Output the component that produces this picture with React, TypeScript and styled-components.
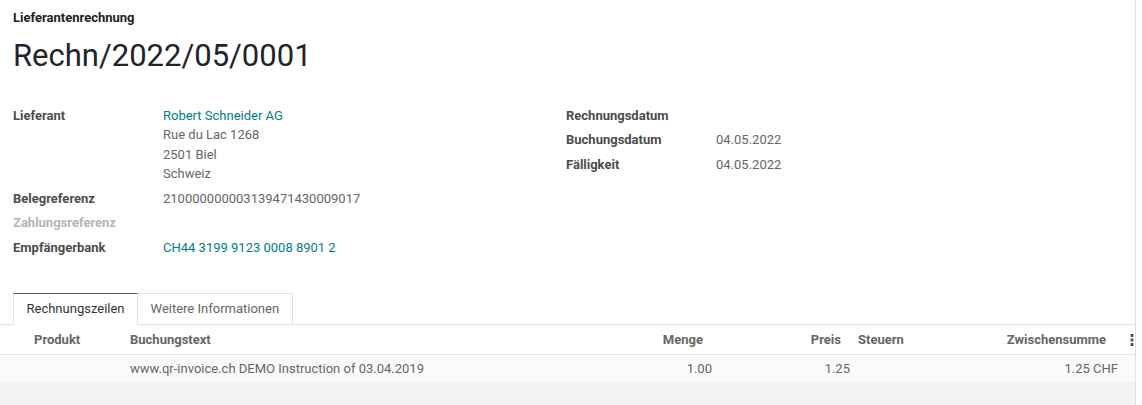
import React from "react";
import styled, { createGlobalStyle } from "styled-components";

const GlobalStyle = createGlobalStyle`
  html, body {
    margin: 0;
    padding: 0;
    background: #fff;
  }
  body {
    font-family: Roboto, "Liberation Sans", sans-serif;
    font-size: 13px;
    line-height: 1.5;
    color: #666;
  }
`;

const Sheet = styled.div`
  width: 1135px;
  min-height: 405px;
  border-right: 1px solid #dee2e6;
  background: #fff;
  display: flex;
  flex-direction: column;
`;

const Head = styled.div`
  padding: 8px 13px 0;
`;

const Kind = styled.div`
  font-weight: 700;
  color: #222;
`;

const Title = styled.h1`
  margin: 8px 0 0;
  font-size: 31px;
  line-height: 40px;
  font-weight: 400;
  color: #212529;
`;

const Groups = styled.div`
  display: grid;
  grid-template-columns: 553px 1fr;
  padding: 30px 13px 0;
`;

const Group = styled.div`
  display: grid;
  grid-template-columns: 150px 1fr;
  align-content: start;
  row-gap: 5px;
`;

const Label = styled.div<{ $muted?: boolean }>`
  font-weight: 700;
  color: ${({ $muted }) => ($muted ? "#b5b5b5" : "#4c4c4c")};
`;

const Value = styled.div<{ $link?: boolean }>`
  color: ${({ $link }) => ($link ? "#017e84" : "#666")};
`;

const Tabs = styled.div`
  display: flex;
  margin-top: 36px;
  padding-left: 13px;
  border-bottom: 1px solid #dee2e6;
`;

const Tab = styled.div<{ $active?: boolean }>`
  height: 32px;
  box-sizing: border-box;
  padding: 0 12.5px;
  display: flex;
  align-items: center;
  margin-bottom: -1px;
  color: ${({ $active }) => ($active ? "#333" : "#666")};
  background: #fff;
  border: 1px solid #dee2e6;
  border-top-color: ${({ $active }) => ($active ? "#714b67" : "#dee2e6")};
  border-bottom-color: ${({ $active }) => ($active ? "#fff" : "#dee2e6")};
  & + & {
    border-left: none;
  }
`;

const List = styled.div`
  flex: 1;
  background: #f3f3f3;
  display: flex;
  flex-direction: column;
`;

const cols = "30px 96px 474px 116px 138px 72px 196px 13px";

const HeaderRow = styled.div`
  display: grid;
  grid-template-columns: ${cols};
  height: 29px;
  align-items: center;
  background: #fff;
  border-bottom: 1px solid #e4e4e4;
  box-shadow: 0 1px 2px rgba(0, 0, 0, 0.06);
`;

const Th = styled.div<{ $right?: boolean; $pr?: number }>`
  font-weight: 700;
  color: #666;
  white-space: nowrap;
  text-align: ${({ $right }) => ($right ? "right" : "left")};
  padding: 0 ${({ $pr }) => $pr ?? 4}px 0 4px;
`;

const DataRow = styled.div`
  display: grid;
  grid-template-columns: ${cols};
  height: 27px;
  align-items: center;
  background: #fafafa;
`;

const Td = styled.div<{ $right?: boolean }>`
  color: #666;
  white-space: nowrap;
  text-align: ${({ $right }) => ($right ? "right" : "left")};
  padding: 0 4px;
`;

const Kebab = styled.div`
  display: flex;
  justify-content: center;
  padding-left: 6px;
`;

const DotsIcon = () => (
  <svg width="4" height="12" viewBox="0 0 4 12" fill="#555">
    <rect x="0.5" y="0" width="3" height="3" rx="0.6" />
    <rect x="0.5" y="4.5" width="3" height="3" rx="0.6" />
    <rect x="0.5" y="9" width="3" height="3" rx="0.6" />
  </svg>
);

export default function App() {
  return (
    <>
      <GlobalStyle />
      <Sheet>
        <Head>
          <Kind>Lieferantenrechnung</Kind>
          <Title>Rechn/2022/05/0001</Title>
        </Head>
        <Groups>
          <Group>
            <Label>Lieferant</Label>
            <Value>
              <Value $link>Robert Schneider AG</Value>
              <div>Rue du Lac 1268</div>
              <div>2501 Biel</div>
              <div>Schweiz</div>
            </Value>
            <Label>Belegreferenz</Label>
            <Value>210000000003139471430009017</Value>
            <Label $muted>Zahlungsreferenz</Label>
            <Value />
            <Label>Empfängerbank</Label>
            <Value $link>CH44 3199 9123 0008 8901 2</Value>
          </Group>
          <Group>
            <Label>Rechnungsdatum</Label>
            <Value />
            <Label>Buchungsdatum</Label>
            <Value>04.05.2022</Value>
            <Label>Fälligkeit</Label>
            <Value>04.05.2022</Value>
          </Group>
        </Groups>
        <Tabs>
          <Tab $active>Rechnungszeilen</Tab>
          <Tab>Weitere Informationen</Tab>
        </Tabs>
        <List>
          <HeaderRow>
            <div />
            <Th>Produkt</Th>
            <Th>Buchungstext</Th>
            <Th $right $pr={13}>Menge</Th>
            <Th $right $pr={13}>Preis</Th>
            <Th>Steuern</Th>
            <Th $right $pr={16}>Zwischensumme</Th>
            <Kebab>
              <DotsIcon />
            </Kebab>
          </HeaderRow>
          <DataRow>
            <div />
            <Td />
            <Td>www.qr-invoice.ch DEMO Instruction of 03.04.2019</Td>
            <Td $right>1.00</Td>
            <Td $right>1.25</Td>
            <Td />
            <Td $right>1.25 CHF</Td>
            <div />
          </DataRow>
        </List>
      </Sheet>
    </>
  );
}
